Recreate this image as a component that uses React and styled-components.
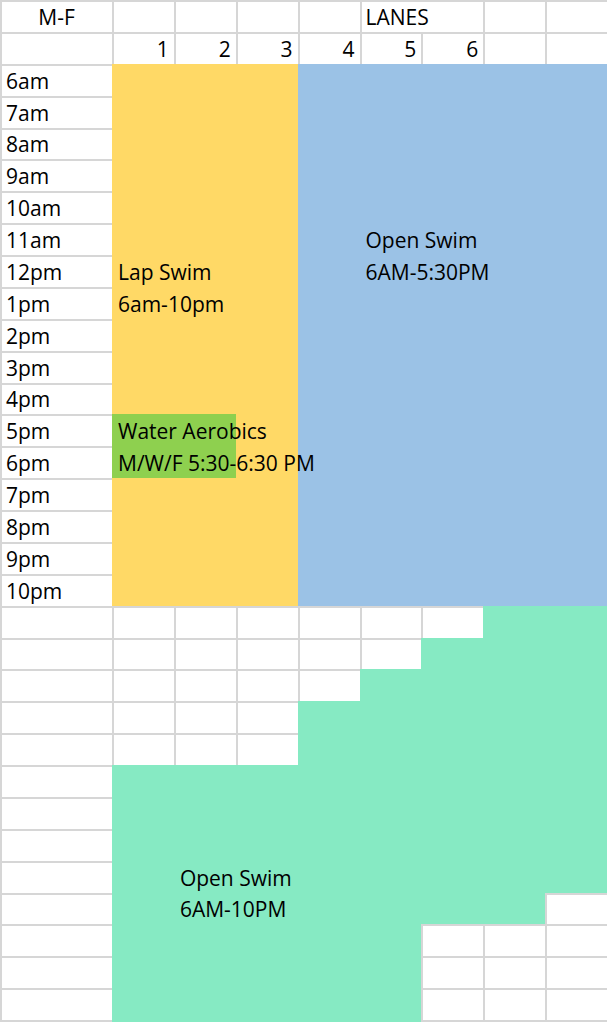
import React from 'react';
import styled, { createGlobalStyle } from 'styled-components';

const GRID = '#d6d6d6';
const YELLOW = '#ffd966';
const BLUE = '#9bc2e6';
const GREEN = '#8ed04f';
const TEAL = '#86eac3';

const times = [
    '6am', '7am', '8am', '9am', '10am', '11am', '12pm', '1pm', '2pm',
    '3pm', '4pm', '5pm', '6pm', '7pm', '8pm', '9pm', '10pm'
];

const ROWS = 32;
const COLS = 9;

// blocks of colour, in sheet rows / columns (0 based)
const fills = [
    { color: YELLOW, row: 2, rows: 17, col: 1, cols: 3 },
    { color: BLUE, row: 2, rows: 17, col: 4, cols: 5 },
    { color: GREEN, row: 13, rows: 2, col: 1, cols: 2 },
    { color: TEAL, row: 19, rows: 1, col: 7, cols: 2 },
    { color: TEAL, row: 20, rows: 1, col: 6, cols: 3 },
    { color: TEAL, row: 21, rows: 1, col: 5, cols: 4 },
    { color: TEAL, row: 22, rows: 2, col: 4, cols: 5 },
    { color: TEAL, row: 24, rows: 4, col: 1, cols: 8 },
    { color: TEAL, row: 28, rows: 1, col: 1, cols: 7 },
    { color: TEAL, row: 29, rows: 3, col: 1, cols: 5 },
];

const labels = [
    { text: 'Open Swim', row: 7, col: 5 },
    { text: '6AM-5:30PM', row: 8, col: 5 },
    { text: 'Lap Swim', row: 8, col: 1 },
    { text: '6am-10pm', row: 9, col: 1 },
    { text: 'Water Aerobics', row: 13, col: 1 },
    { text: 'M/W/F 5:30-6:30 PM', row: 14, col: 1 },
    { text: 'Open Swim', row: 27, col: 2 },
    { text: '6AM-10PM', row: 28, col: 2 },
];

const cellText = (r, c) => {
    if (r === 0 && c === 0) return { text: 'M-F', align: 'center' };
    if (r === 0 && c === 5) return { text: 'LANES', span: 2 };
    if (r === 1 && c >= 1 && c <= 6) return { text: String(c), align: 'flex-end' };
    if (c === 0 && r >= 2 && r < 2 + times.length) return { text: times[r - 2] };
    return {};
};

class App extends React.Component {
    render() {
        const cells = [];
        for (let r = 0; r < ROWS; r++) {
            for (let c = 0; c < COLS; c++) {
                if (r === 0 && c === 6) continue; // LANES runs over this one
                const { text, align, span } = cellText(r, c);
                cells.push(
                    <Cell
                        key={`${r}-${c}`}
                        $r={r}
                        $c={c}
                        $span={span}
                        $align={align}
                        $last={r === ROWS - 1}
                    >
                        {text}
                    </Cell>
                );
            }
        }

        return (
            <>
                <GlobalStyle />
                <Sheet>
                    {cells}
                    {fills.map((f, i) => (
                        <Fill
                            key={i}
                            $color={f.color}
                            $r={f.row}
                            $rows={f.rows}
                            $c={f.col}
                            $cols={f.cols}
                        />
                    ))}
                    {labels.map((l, i) => (
                        <Label key={i} $r={l.row} $c={l.col}>
                            {l.text}
                        </Label>
                    ))}
                </Sheet>
            </>
        );
    }
}

const GlobalStyle = createGlobalStyle`
    body {
        margin: 0;
        background: #fff;
    }
`;

const Sheet = styled.div`
    display: grid;
    width: 607px;
    grid-template-columns: 112px repeat(8, minmax(0, 1fr));
    grid-template-rows: repeat(31, 31.875px) 33.875px;
    font-family: 'Open Sans', sans-serif;
    font-size: 21px;
    color: #000;
    overflow: hidden;
`;

const Cell = styled.div`
    grid-row: ${p => p.$r + 1};
    grid-column: ${p => p.$c + 1} / span ${p => p.$span || 1};
    display: flex;
    align-items: flex-end;
    justify-content: ${p => p.$align || 'flex-start'};
    padding: 0 5px 4px 4px;
    line-height: 21px;
    white-space: nowrap;
    border-left: 2px solid ${GRID};
    border-top: 2px solid ${GRID};
    border-bottom: ${p => (p.$last ? `2px solid ${GRID}` : 'none')};
`;

const Fill = styled.div`
    grid-row: ${p => p.$r + 1} / span ${p => p.$rows};
    grid-column: ${p => p.$c + 1} / span ${p => p.$cols};
    background: ${p => p.$color};
`;

const Label = styled.div`
    grid-row: ${p => p.$r + 1};
    grid-column: ${p => p.$c + 1};
    display: flex;
    align-items: flex-end;
    padding: 0 0 4px 6px;
    line-height: 21px;
    white-space: nowrap;
    position: relative;
    z-index: 1;
`;

export default App;
